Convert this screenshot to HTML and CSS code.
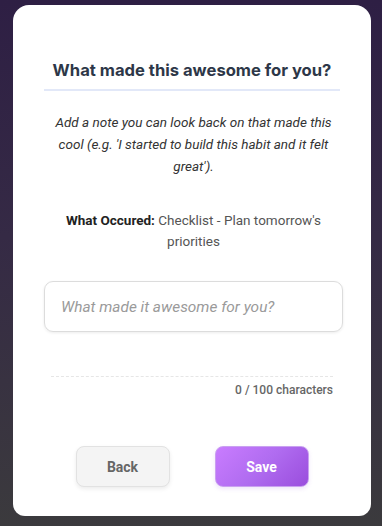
FILE: index.html
```html
<!DOCTYPE html>
<html>
<head>
<meta charset="utf-8">
<link rel="stylesheet" href="styles.css">
</head>
<body>
<div class="overlay">
  <div class="card">
    <h1 class="title">What made this awesome for you?</h1>
    <p class="desc">Add a note you can look back on that made this cool (e.g. 'I started to build this habit and it felt great').</p>
    <p class="occured"><strong>What Occured:</strong> Checklist - Plan tomorrow's priorities</p>
    <div class="input">What made it awesome for you?</div>
    <div class="counter">0 / 100 characters</div>
    <div class="actions">
      <button class="btn back">Back</button>
      <button class="btn save">Save</button>
    </div>
  </div>
</div>
</body>
</html>
```

FILE: styles.css
```css
html, body {
  margin: 0;
  padding: 0;
  width: 382px;
  height: 526px;
  overflow: hidden;
}
body {
  background: linear-gradient(180deg, #2e1f44 0%, #352a45 45%, #3b3a3d 100%);
  font-family: Roboto, "Liberation Sans", sans-serif;
}
.overlay {
  padding: 5px 11px 0 13px;
}
.card {
  background: #fff;
  width: 358px;
  height: 511px;
  box-sizing: border-box;
  border-radius: 16px 16px 12px 12px;
  padding: 53px 28px 0 31px;
  display: flex;
  flex-direction: column;
}
.title {
  margin: 0 3px 0 0;
  font-family: Inter, "Noto Sans", sans-serif;
  font-weight: 700;
  font-size: 16.6px;
  line-height: 24px;
  color: #2d3748;
  text-align: center;
  padding-bottom: 7px;
  border-bottom: 2px solid #e2e8f8;
}
.desc {
  margin: 20px 0 0;
  font-style: italic;
  font-size: 13.5px;
  line-height: 22px;
  color: #333;
  text-align: center;
  padding: 0 6px;
}
.occured {
  margin: 33px 0 0;
  font-size: 13.5px;
  line-height: 21px;
  color: #555;
  text-align: center;
  padding: 0 6px;
}
.occured strong {
  color: #222;
  font-weight: 700;
}
.input {
  margin-top: 29px;
  height: 51px;
  box-sizing: border-box;
  border: 1.5px solid #dcdcdc;
  border-radius: 9px;
  box-shadow: 0 1px 3px rgba(0,0,0,0.08);
  padding: 0 16px;
  display: flex;
  align-items: center;
  font-style: italic;
  font-size: 15.4px;
  color: #9a9a9a;
}
.counter {
  margin: 44px 10px 0 7px;
  border-top: 1px dashed #e6e6e6;
  padding-top: 5px;
  text-align: right;
  font-size: 12px;
  font-weight: 500;
  line-height: 16px;
  color: #666;
}
.actions {
  margin-top: 48px;
  display: flex;
  justify-content: center;
  gap: 45px;
  padding-right: 3px;
}
.btn {
  width: 94px;
  height: 41px;
  border-radius: 8px;
  font-family: Roboto, "Liberation Sans", sans-serif;
  font-size: 14px;
  font-weight: 700;
  cursor: pointer;
}
.back {
  background: #f4f4f4;
  border: 1px solid #e2e2e2;
  color: #666;
  box-shadow: 0 2px 4px rgba(0,0,0,0.08);
}
.save {
  background: linear-gradient(135deg, #c97cff 0%, #b06cf0 50%, #9a4ddd 100%);
  border: 1px solid #c9a0f0;
  color: #fff;
  box-shadow: 0 2px 4px rgba(150,80,220,0.15);
}
```
